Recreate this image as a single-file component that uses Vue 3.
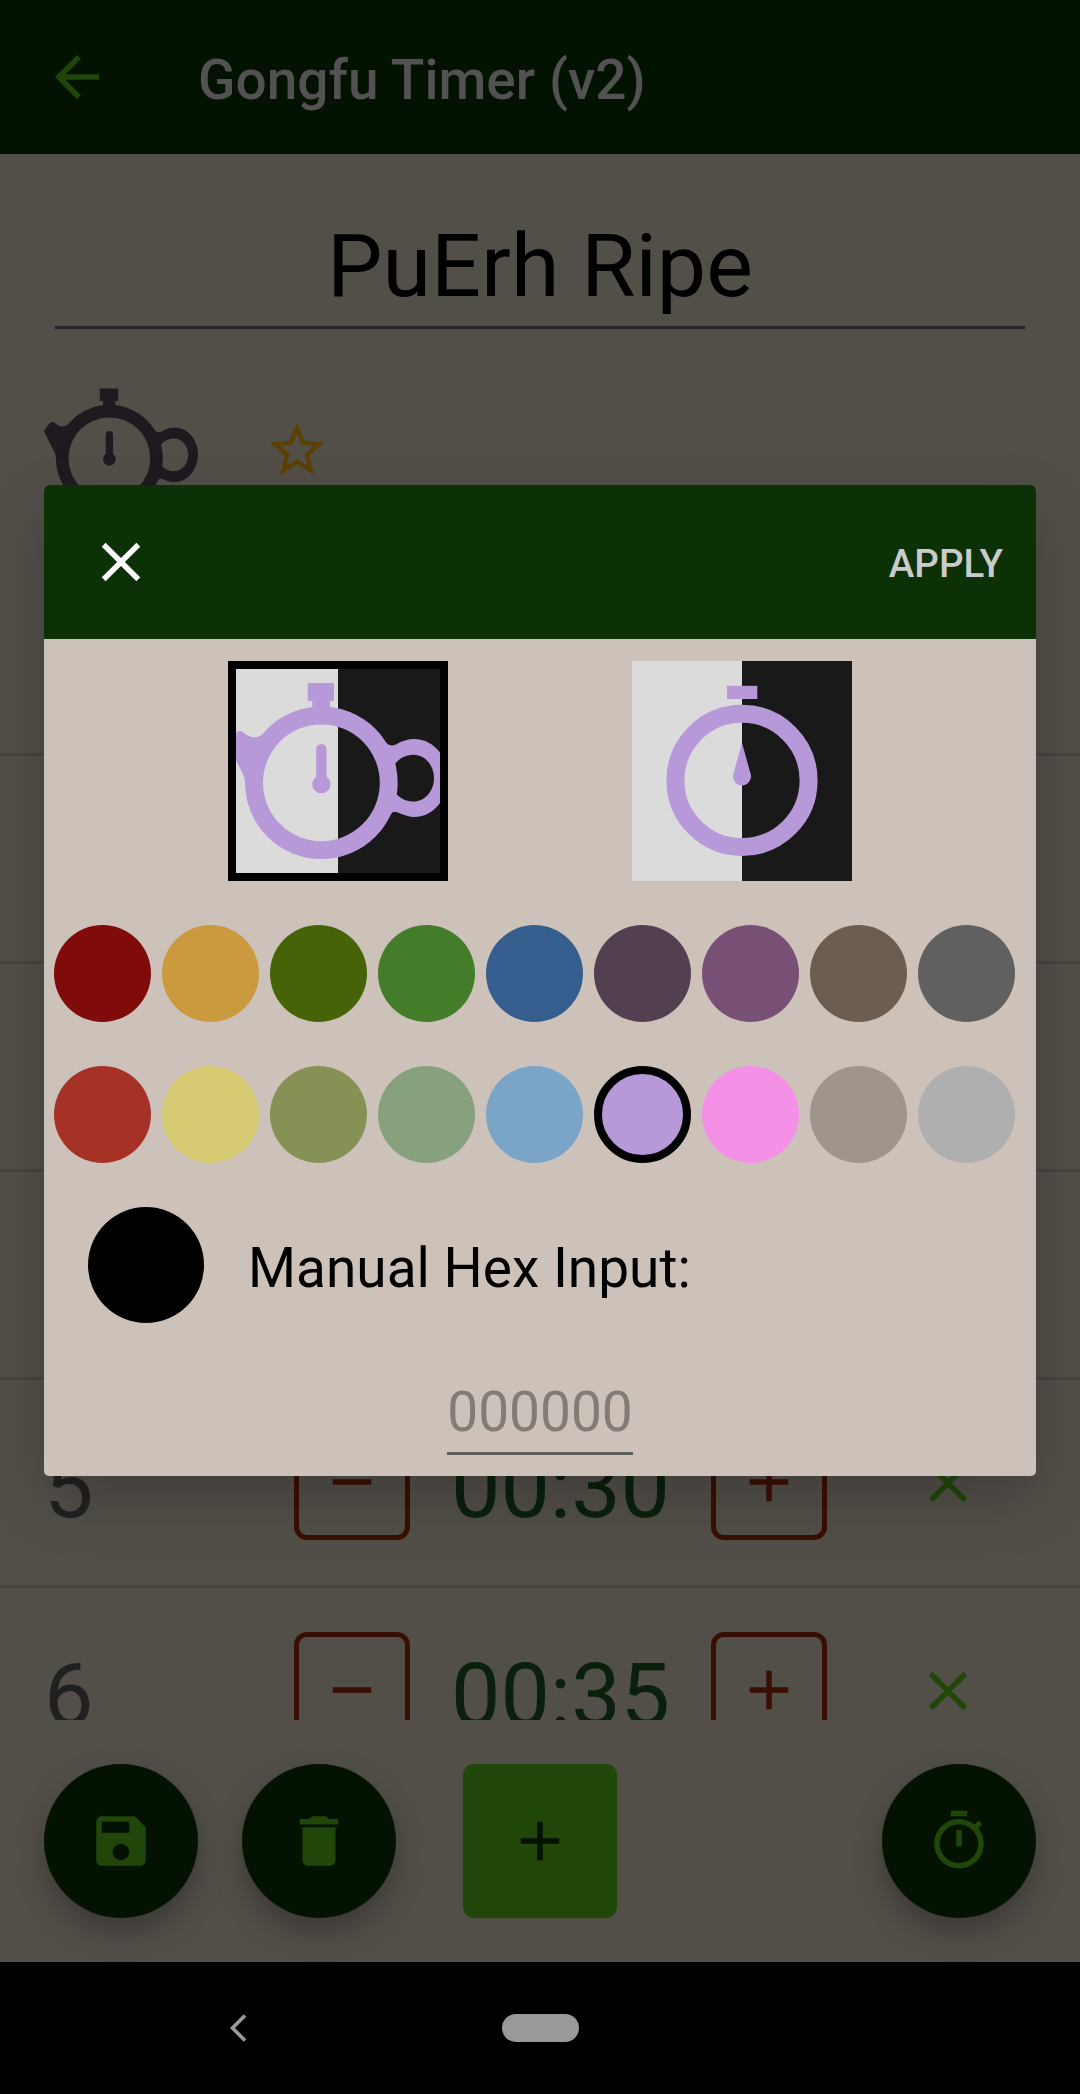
<script setup>
const icons = {
  back: 'M20 11H7.83l5.59-5.59L12 4l-8 8 8 8 1.41-1.41L7.83 13H20v-2z',
  close: 'M19 6.41L17.59 5 12 10.59 6.41 5 5 6.41 10.59 12 5 17.59 6.41 19 12 13.41 17.59 19 19 17.59 13.41 12z',
  star: 'M22 9.24l-7.19-.62L12 2 9.19 8.63 2 9.24l5.46 4.73L5.82 21 12 17.27 18.18 21l-1.63-7.03L22 9.24zM12 15.4l-3.76 2.27 1-4.28-3.32-2.88 4.38-.38L12 6.1l1.71 4.04 4.38.38-3.32 2.88 1 4.28L12 15.4z',
  plus: 'M19 13h-6v6h-2v-6H5v-2h6V5h2v6h6v2z',
  minus: 'M19 13H5v-2h14v2z',
  save: 'M17 3H5c-1.11 0-2 .9-2 2v14c0 1.1.89 2 2 2h14c1.1 0 2-.9 2-2V7l-4-4zm-5 16c-1.66 0-3-1.34-3-3s1.34-3 3-3 3 1.34 3 3-1.34 3-3 3zm3-10H5V5h10v4z',
  trash: 'M6 19c0 1.1.9 2 2 2h8c1.1 0 2-.9 2-2V7H6v12zM19 4h-3.5l-1-1h-5l-1 1H5v2h14V4z',
  timer: 'M15 1H9v2h6V1zm-4 13h2V8h-2v6zm8.03-6.61l1.42-1.42c-.43-.51-.9-.99-1.41-1.41l-1.42 1.42C16.07 4.74 14.12 4 12 4c-4.97 0-9 4.03-9 9s4.02 9 9 9 9-4.03 9-9c0-2.12-.74-4.07-1.97-5.61zM12 20c-3.87 0-7-3.13-7-7s3.13-7 7-7 7 3.13 7 7-3.13 7-7 7z',
}

const pot = [
  'M79.7 22H106V40H102V50H84.3V40H79.7Z',
  'M17.2 126Q17.2 117 14.5 112L8 99.5 0 83Q2.5 78 7 73Q11 68 15.5 71.5Q26 80.5 36 72.5L48 60 52 70 38 86 27 108 26 130Z',
  'M150 78L158.5 82Q161.5 86 168 83.5Q177 78 186 78C205 78 220 95 220 116.5C220 138 205 156 186 156Q180 156 169 151.3Q165 149.5 163.5 152.5L150 170 159 122ZM185.3 93.7C173 93.7 162 104 162 117.2C162 130 173 140.5 185.3 140.5C197 140.5 206 130 206 117.2C206 104 197 93.7 185.3 93.7Z',
  'M93.4 45.5a76.3 76.3 0 1 0 0 152.6a76.3 76.3 0 1 0 0-152.6zM93.4 63.4a58.4 58.4 0 1 1 0 116.8a58.4 58.4 0 1 1 0-116.8z',
  'M88.2 88.2a5.2 5.2 0 0 1 10.4 0V115.8A9.1 9.1 0 1 1 88.2 115.8Z',
]

const rows = [
  { n: '' }, { n: '' }, { n: '' }, { n: '' },
  { n: '5', time: '00:30' },
  { n: '6', time: '00:35' },
]

const swatches = [
  ['#800b0b', '#cb9a3e', '#466307', '#437d29', '#355e8f', '#524051', '#795075', '#6d5c50', '#606060'],
  ['#a63227', '#d7cb73', '#869155', '#87a07e', '#7ba5c8', '#b799d9', '#f491e6', '#a1948b', '#afafaf'],
]
const selected = '#b799d9'
</script>

<template>
  <div class="screen">
    <header class="appbar">
      <svg class="ic" viewBox="0 0 24 24"><path :d="icons.back" /></svg>
      <h1>Gongfu Timer (v2)</h1>
    </header>

    <main class="page">
      <div class="name">PuErh Ripe</div>
      <div class="badges">
        <svg class="pot" viewBox="0 0 220 220"><path v-for="(d, i) in pot" :key="i" :d="d" fill-rule="evenodd" /></svg>
        <svg class="ic star" viewBox="0 0 24 24"><path :d="icons.star" /></svg>
      </div>
      <div class="list">
        <div v-for="(r, i) in rows" :key="i" class="row">
          <template v-if="r.time">
            <span class="num">{{ r.n }}</span>
            <div class="step"><svg class="ic" viewBox="0 0 24 24"><path :d="icons.minus" /></svg></div>
            <span class="time">{{ r.time }}</span>
            <div class="step"><svg class="ic" viewBox="0 0 24 24"><path :d="icons.plus" /></svg></div>
            <svg class="ic del" viewBox="0 0 24 24"><path :d="icons.close" /></svg>
          </template>
        </div>
      </div>
    </main>

    <footer class="actions">
      <div class="fab"><svg class="ic" viewBox="0 0 24 24"><path :d="icons.save" /></svg></div>
      <div class="fab"><svg class="ic" viewBox="0 0 24 24"><path :d="icons.trash" /></svg></div>
      <div class="add"><svg class="ic" viewBox="0 0 24 24"><path :d="icons.plus" /></svg></div>
      <div class="fab last"><svg class="ic" viewBox="0 0 24 24"><path :d="icons.timer" /></svg></div>
    </footer>

    <nav class="sysnav">
      <svg class="chev" viewBox="0 0 17 28"><path d="M15 1.5L2.5 14 15 26.5" /></svg>
      <div class="pill"></div>
    </nav>

    <section class="dialog">
      <div class="dhead">
        <svg class="ic" viewBox="0 0 24 24"><path :d="icons.close" /></svg>
        <span class="apply">APPLY</span>
      </div>
      <div class="dbody">
        <div class="previews">
          <div class="preview chosen">
            <svg viewBox="0 0 220 220"><path v-for="(d, i) in pot" :key="i" :d="d" fill-rule="evenodd" /></svg>
          </div>
          <div class="preview">
            <svg viewBox="0 0 220 220">
              <rect x="95" y="24.8" width="30.3" height="13.2" />
              <circle class="ring" cx="110" cy="119.4" r="66.6" />
              <path d="M110 82L118.8 113.5A9 9 0 1 1 101.2 113.5Z" />
            </svg>
          </div>
        </div>
        <div v-for="(line, i) in swatches" :key="i" class="swatches">
          <div v-for="c in line" :key="c" class="swatch" :class="{ on: c === selected }" :style="{ backgroundColor: c }"></div>
        </div>
        <div class="manual">
          <div class="dot"></div>
          <span>Manual Hex Input:</span>
        </div>
        <div class="hex">000000</div>
      </div>
    </section>
  </div>
</template>

<style>
body {
  margin: 0;
  background: #000;
}
</style>

<style scoped>
.screen {
  position: relative;
  display: flex;
  flex-direction: column;
  width: 1080px;
  height: 2094px;
  overflow: hidden;
  background: #524e48;
  font-family: Roboto, "Liberation Sans", sans-serif;
}
.screen * {
  box-sizing: border-box;
}
svg {
  display: block;
  flex: none;
}
.ic {
  width: 66px;
  height: 66px;
  fill: currentColor;
}
.appbar {
  display: flex;
  align-items: center;
  gap: 88px;
  height: 154px;
  padding: 0 44px;
  background: #041201;
  color: #21460a;
}
h1 {
  margin: 0;
  padding-top: 6px;
  font-size: 55px;
  font-weight: 500;
  line-height: 64px;
  color: #525252;
}
.page {
  height: 1566px;
  overflow: hidden;
}
.name {
  height: 175px;
  margin: 0 55px;
  padding-top: 60px;
  border-bottom: 3px solid #262326;
  font-size: 88px;
  line-height: 104px;
  text-align: center;
  color: #000;
}
.badges {
  display: flex;
  align-items: center;
  gap: 66px;
  height: 219px;
  padding: 22px 44px 0;
}
.pot {
  width: 154px;
  height: 154px;
  fill: #1f1920;
}
.star {
  color: #5c4000;
}
.row {
  display: flex;
  align-items: center;
  height: 208px;
  padding-left: 44px;
  border-bottom: 3px solid #494441;
}
.num {
  width: 250px;
  padding-top: 8px;
  font-size: 88px;
  line-height: 104px;
  color: #202020;
}
.step {
  display: flex;
  align-items: center;
  justify-content: center;
  width: 116px;
  height: 116px;
  margin-top: -1px;
  border: 5px solid #3a0f03;
  border-radius: 13px;
  color: #3a0f03;
}
.time {
  width: 301px;
  padding-top: 8px;
  font-size: 88px;
  line-height: 104px;
  text-align: center;
  color: #0a200c;
}
.del {
  margin-left: 88px;
  color: #21460a;
}
.actions {
  display: flex;
  gap: 44px;
  height: 242px;
  padding: 44px 44px 0;
}
.fab,
.add {
  display: flex;
  align-items: center;
  justify-content: center;
  width: 154px;
  height: 154px;
}
.fab {
  border-radius: 50%;
  background: #041201;
  color: #21460a;
  box-shadow: 0 14px 30px rgba(0, 0, 0, 0.27);
}
.add {
  margin-left: 23px;
  border-radius: 11px;
  background: #21460a;
  color: #041201;
}
.last {
  margin-left: auto;
}
.sysnav {
  display: flex;
  align-items: center;
  height: 132px;
  padding-left: 230px;
  background: #000;
}
.chev {
  width: 17px;
  height: 28px;
  fill: none;
  stroke: #999;
  stroke-width: 3.6;
}
.pill {
  width: 77px;
  height: 28px;
  margin-left: 255px;
  border-radius: 14px;
  background: #999;
}
.dialog {
  position: absolute;
  left: 44px;
  top: 485px;
  width: 992px;
  height: 991px;
  border-radius: 5px;
  overflow: hidden;
  background: #cdc2b9;
  box-shadow: 0 24px 60px rgba(0, 0, 0, 0.2);
}
.dhead {
  display: flex;
  align-items: center;
  justify-content: space-between;
  height: 154px;
  padding: 0 33px 0 44px;
  background: #0c3106;
  color: #fff;
}
.apply {
  padding-top: 3px;
  font-size: 38.5px;
  font-weight: 500;
  line-height: 46px;
  color: #cbcbcb;
}
.dbody {
  padding-top: 22px;
}
.previews {
  display: flex;
  gap: 184px;
  padding-left: 184px;
  margin-bottom: 44px;
}
.preview {
  width: 220px;
  height: 220px;
  overflow: hidden;
  background: linear-gradient(90deg, #dbdbdb 50%, #191919 50%);
}
.preview svg {
  width: 220px;
  height: 220px;
  fill: #b799d9;
}
.preview .ring {
  fill: none;
  stroke: #b799d9;
  stroke-width: 18;
}
.chosen {
  border: 8px solid #000;
}
.chosen svg {
  margin: -8px;
}
.swatches {
  display: flex;
  gap: 11px;
  padding-left: 10px;
  margin-bottom: 44px;
}
.swatch {
  width: 97px;
  height: 97px;
  border-radius: 50%;
}
.on {
  border: 8px solid #000;
}
.manual {
  display: flex;
  align-items: center;
  gap: 44px;
  padding-left: 44px;
  font-size: 55px;
  line-height: 64px;
  color: #000;
}
.manual span {
  padding-top: 6px;
}
.dot {
  width: 116px;
  height: 116px;
  border-radius: 50%;
  background: #000;
}
.hex {
  width: 186px;
  height: 75px;
  margin: 57px auto 0;
  border-bottom: 3px solid #5f5e58;
  font-size: 55px;
  line-height: 64px;
  text-align: center;
  color: #827c76;
}
</style>
